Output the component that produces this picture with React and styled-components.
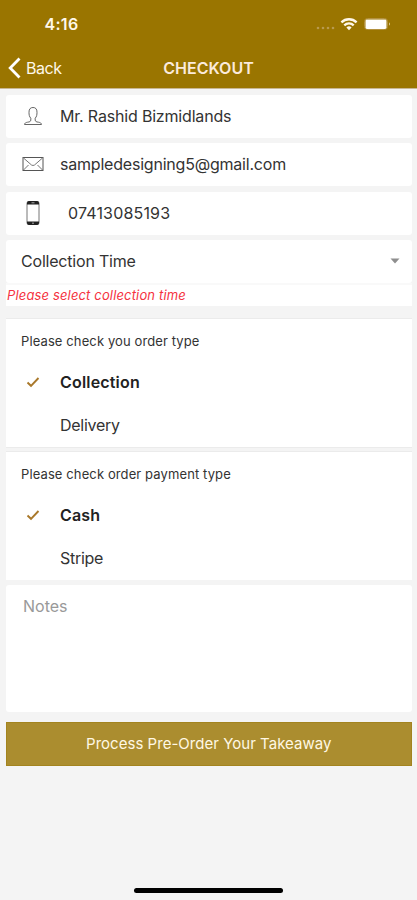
import React, { useState } from "react"
import styled, { createGlobalStyle } from "styled-components"

const GlobalStyle = createGlobalStyle`
  body {
    margin: 0;
    background: #f4f4f4;
    font-family: Inter, "Liberation Sans", sans-serif;
  }
  * {
    box-sizing: border-box;
  }
`
const Screen = styled.div`
  display: flex;
  flex-direction: column;
  width: 417px;
  height: 900px;
  background: #f4f4f4;
  overflow: hidden;
`
const Header = styled.header`
  flex: none;
  height: 89px;
  background: #9a7500;
  border-bottom: 1px solid #c9b793;
  color: #fff8ea;
`
const StatusBar = styled.div`
  display: flex;
  align-items: center;
  justify-content: space-between;
  height: 48px;
  padding: 0 26px 0 44.5px;
`
const Clock = styled.span`
  font-size: 16px;
  font-weight: 600;
  line-height: 20px;
  letter-spacing: 0.3px;
`
const StatusIcons = styled.div`
  display: flex;
  align-items: center;
  gap: 5px;
`
const NavBar = styled.div`
  display: grid;
  grid-template-columns: 120px 1fr 120px;
  align-items: center;
  height: 40px;
  padding-bottom: 1px;
`
const BackButton = styled.button`
  display: flex;
  align-items: center;
  gap: 5px;
  padding: 0 0 0 8px;
  border: 0;
  background: transparent;
  color: #fff8ea;
  font-family: inherit;
  font-size: 16px;
  line-height: 20px;
  letter-spacing: -0.45px;
`
const Title = styled.h1`
  margin: 0;
  text-align: center;
  font-size: 16px;
  font-weight: 600;
  line-height: 20px;
  color: #fbeadb;
`
const Form = styled.main`
  display: flex;
  flex-direction: column;
  padding: 5.5px 5px 0 6px;
`
const Fields = styled.div`
  display: flex;
  flex-direction: column;
  gap: 5.5px;
`
const Field = styled.div`
  display: flex;
  align-items: center;
  height: 43px;
  padding: 0 12px 1px 0;
  background: #fff;
  border-radius: 3px;
`
const FieldIcon = styled.span`
  display: flex;
  justify-content: center;
  width: 53px;
  margin-right: ${(p) => p.$gap || 1}px;
`
const Text = styled.span`
  font-size: 16px;
  font-weight: ${(p) => (p.$bold ? 600 : 400)};
  line-height: 20px;
  letter-spacing: ${(p) => p.$track || 0}px;
  color: ${(p) => (p.$bold ? "#222" : "#333")};
  white-space: nowrap;
`
const Select = styled(Field)`
  justify-content: space-between;
  padding-left: 15px;
`
const ErrorText = styled.p`
  height: 21px;
  margin: 2px 0 0;
  padding-left: 1px;
  background: #fff;
  box-shadow: 0 -2px 0 #f9f9f9;
  color: #f5333f;
  font-size: 13px;
  font-style: italic;
  line-height: 21px;
  letter-spacing: 0.15px;
`
const Section = styled.section`
  height: 128px;
  margin-top: ${(p) => p.$top}px;
  padding-top: 11.5px;
  background: #fff;
  box-shadow: 0 -1px 0 #ebebeb, 0 1px 0 ${(p) => (p.$last ? "#f4f4f4" : "#ebebeb")};
`
const SectionTitle = styled.h2`
  margin: 0 0 10px 15px;
  color: #333;
  font-size: 13px;
  font-weight: 400;
  line-height: 20px;
  letter-spacing: 0.11px;
`
const Option = styled.button`
  display: flex;
  align-items: center;
  width: 100%;
  height: 43px;
  padding: 0;
  border: 0;
  background: transparent;
  font-family: inherit;
`
const Notes = styled.textarea`
  display: block;
  width: 100%;
  height: 127px;
  margin: 5px 0 10px;
  padding: 11px 17px;
  border: 0;
  border-radius: 3px;
  outline: 0;
  resize: none;
  background: #fff;
  font-family: inherit;
  font-size: 16px;
  line-height: 20px;
  &::placeholder {
    color: #999;
    opacity: 1;
  }
`
const SubmitButton = styled.button`
  height: 43.5px;
  margin-left: -0.5px;
  padding: 1px 0 0;
  border: 1px solid #a3841f;
  background: #ab8d2f;
  color: #fff8e4;
  font-family: inherit;
  font-size: 15px;
  line-height: 20px;
  letter-spacing: 0.03px;
`
const HomeIndicator = styled.div`
  width: 149px;
  height: 5px;
  margin: auto auto 7px;
  border-radius: 3px;
  background: #000;
`

const SignalDots = () => (
  <svg width="20" height="14" viewBox="0 0 20 14" fill="#b99a4e">
    <circle cx="3" cy="11" r="1.3" />
    <circle cx="8" cy="11" r="1.3" />
    <circle cx="13" cy="11" r="1.3" />
    <circle cx="18" cy="11" r="1.3" />
  </svg>
)

const WifiIcon = () => (
  <svg width="18" height="14" viewBox="0 0 18 14" fill="none" stroke="#fff8ea" strokeWidth="2.3">
    <path d="M1.4 5.4a10.8 10.8 0 0 1 15.2 0" />
    <path d="M4.3 8.4a6.7 6.7 0 0 1 9.4 0" />
    <path d="M9 13.2 6.4 10.5a3.8 3.8 0 0 1 5.2 0z" fill="#fff8ea" stroke="none" />
  </svg>
)

const BatteryIcon = () => (
  <svg width="28" height="14" viewBox="0 0 28 14">
    <rect x="1.5" y="1.5" width="23" height="11" rx="3" fill="none" stroke="#b3913f" />
    <rect x="2.5" y="2.5" width="21" height="9.5" rx="1.4" fill="#fff" />
    <path d="M26 5.4c1.3.4 1.3 2.8 0 3.2z" fill="#dcc995" />
  </svg>
)

const BackArrow = () => (
  <svg width="13" height="22" viewBox="0 0 13 22" fill="none" stroke="#fff" strokeWidth="2.8">
    <path d="M11.5 1.5 2.2 11l9.3 9.5" />
  </svg>
)

const UserIcon = () => (
  <svg width="20" height="20" viewBox="0 0 20 20" fill="none" stroke="#666">
    <path d="M7.8 12.2C6.300 10.700 6 8.800 6 6.200 6 3 7.400 1.500 10 1.500s4 1.500 4 4.700c0 2.600-.3 4.500-1.800 6v1.900c0 1.400 1.200 1.800 3.200 2.100 2 .3 2.900.9 3.100 2.300H1.500c.2-1.400 1.100-2 3.100-2.300 2-.3 3.200-.7 3.200-2.100z" />
  </svg>
)

const MailIcon = () => (
  <svg width="22" height="16" viewBox="0 0 22 16" fill="none" stroke="#555">
    <rect x="1" y="1.5" width="20" height="13" />
    <path d="M1.5 2 9.500 9q1.500 1 3 0l8-7M1.500 14l5-5M20.500 14l-5-5" stroke="#777" />
  </svg>
)

const PhoneIcon = () => (
  <svg width="14" height="26" viewBox="0 0 14 26">
    <rect x="1" y="1.5" width="12" height="23" rx="1.8" fill="#fff" stroke="#777" />
    <path d="M1 4.500V3q0-2 2-2h8q2 0 2 2v1.500zM1 21.500V23q0 2 2 2h8q2 0 2-2v-1.500z" fill="#222" />
    <path d="M5.500 2.800h3M6 23.200h2" stroke="#aaa" />
  </svg>
)

const Check = () => (
  <svg width="14" height="12" viewBox="0 0 14 12" fill="none" stroke="#a9782a" strokeWidth="1.9">
    <path d="M1.5 6.500 5 9.800 12.500 2" />
  </svg>
)

const Caret = () => (
  <svg width="10" height="6" viewBox="0 0 10 6" fill="#8e8e8e">
    <path d="M.5.5h9L5 5.500z" />
  </svg>
)

const Options = ({ list, value, onChange }) =>
  list.map((item) => (
    <Option key={item} onClick={() => onChange(item)}>
      <FieldIcon>{value === item && <Check />}</FieldIcon>
      <Text $bold={value === item} $track={value === item ? 0.18 : -0.28}>{item}</Text>
    </Option>
  ))

const App = () => {
  const [orderType, setOrderType] = useState("Collection")
  const [payment, setPayment] = useState("Cash")
  return (
    <>
      <GlobalStyle />
      <Screen>
        <Header>
          <StatusBar>
            <Clock>4:16</Clock>
            <StatusIcons>
              <SignalDots />
              <WifiIcon />
              <BatteryIcon />
            </StatusIcons>
          </StatusBar>
          <NavBar>
            <BackButton><BackArrow />Back</BackButton>
            <Title>CHECKOUT</Title>
          </NavBar>
        </Header>
        <Form>
          <Fields>
            <Field>
              <FieldIcon><UserIcon /></FieldIcon>
              <Text $track={-0.18}>Mr. Rashid Bizmidlands</Text>
            </Field>
            <Field>
              <FieldIcon><MailIcon /></FieldIcon>
              <Text $track={-0.21}>sampledesigning5@gmail.com</Text>
            </Field>
            <Field>
              <FieldIcon $gap={9}><PhoneIcon /></FieldIcon>
              <Text $track={0.17}>07413085193</Text>
            </Field>
            <Select>
              <Text $track={-0.2}>Collection Time</Text>
              <Caret />
            </Select>
          </Fields>
          <ErrorText>Please select collection time</ErrorText>
          <Section $top={13}>
            <SectionTitle>Please check you order type</SectionTitle>
            <Options list={["Collection", "Delivery"]} value={orderType} onChange={setOrderType} />
          </Section>
          <Section $top={5} $last>
            <SectionTitle>Please check order payment type</SectionTitle>
            <Options list={["Cash", "Stripe"]} value={payment} onChange={setPayment} />
          </Section>
          <Notes placeholder="Notes" />
          <SubmitButton>Process Pre-Order Your Takeaway</SubmitButton>
        </Form>
        <HomeIndicator />
      </Screen>
    </>
  )
}

export default App
